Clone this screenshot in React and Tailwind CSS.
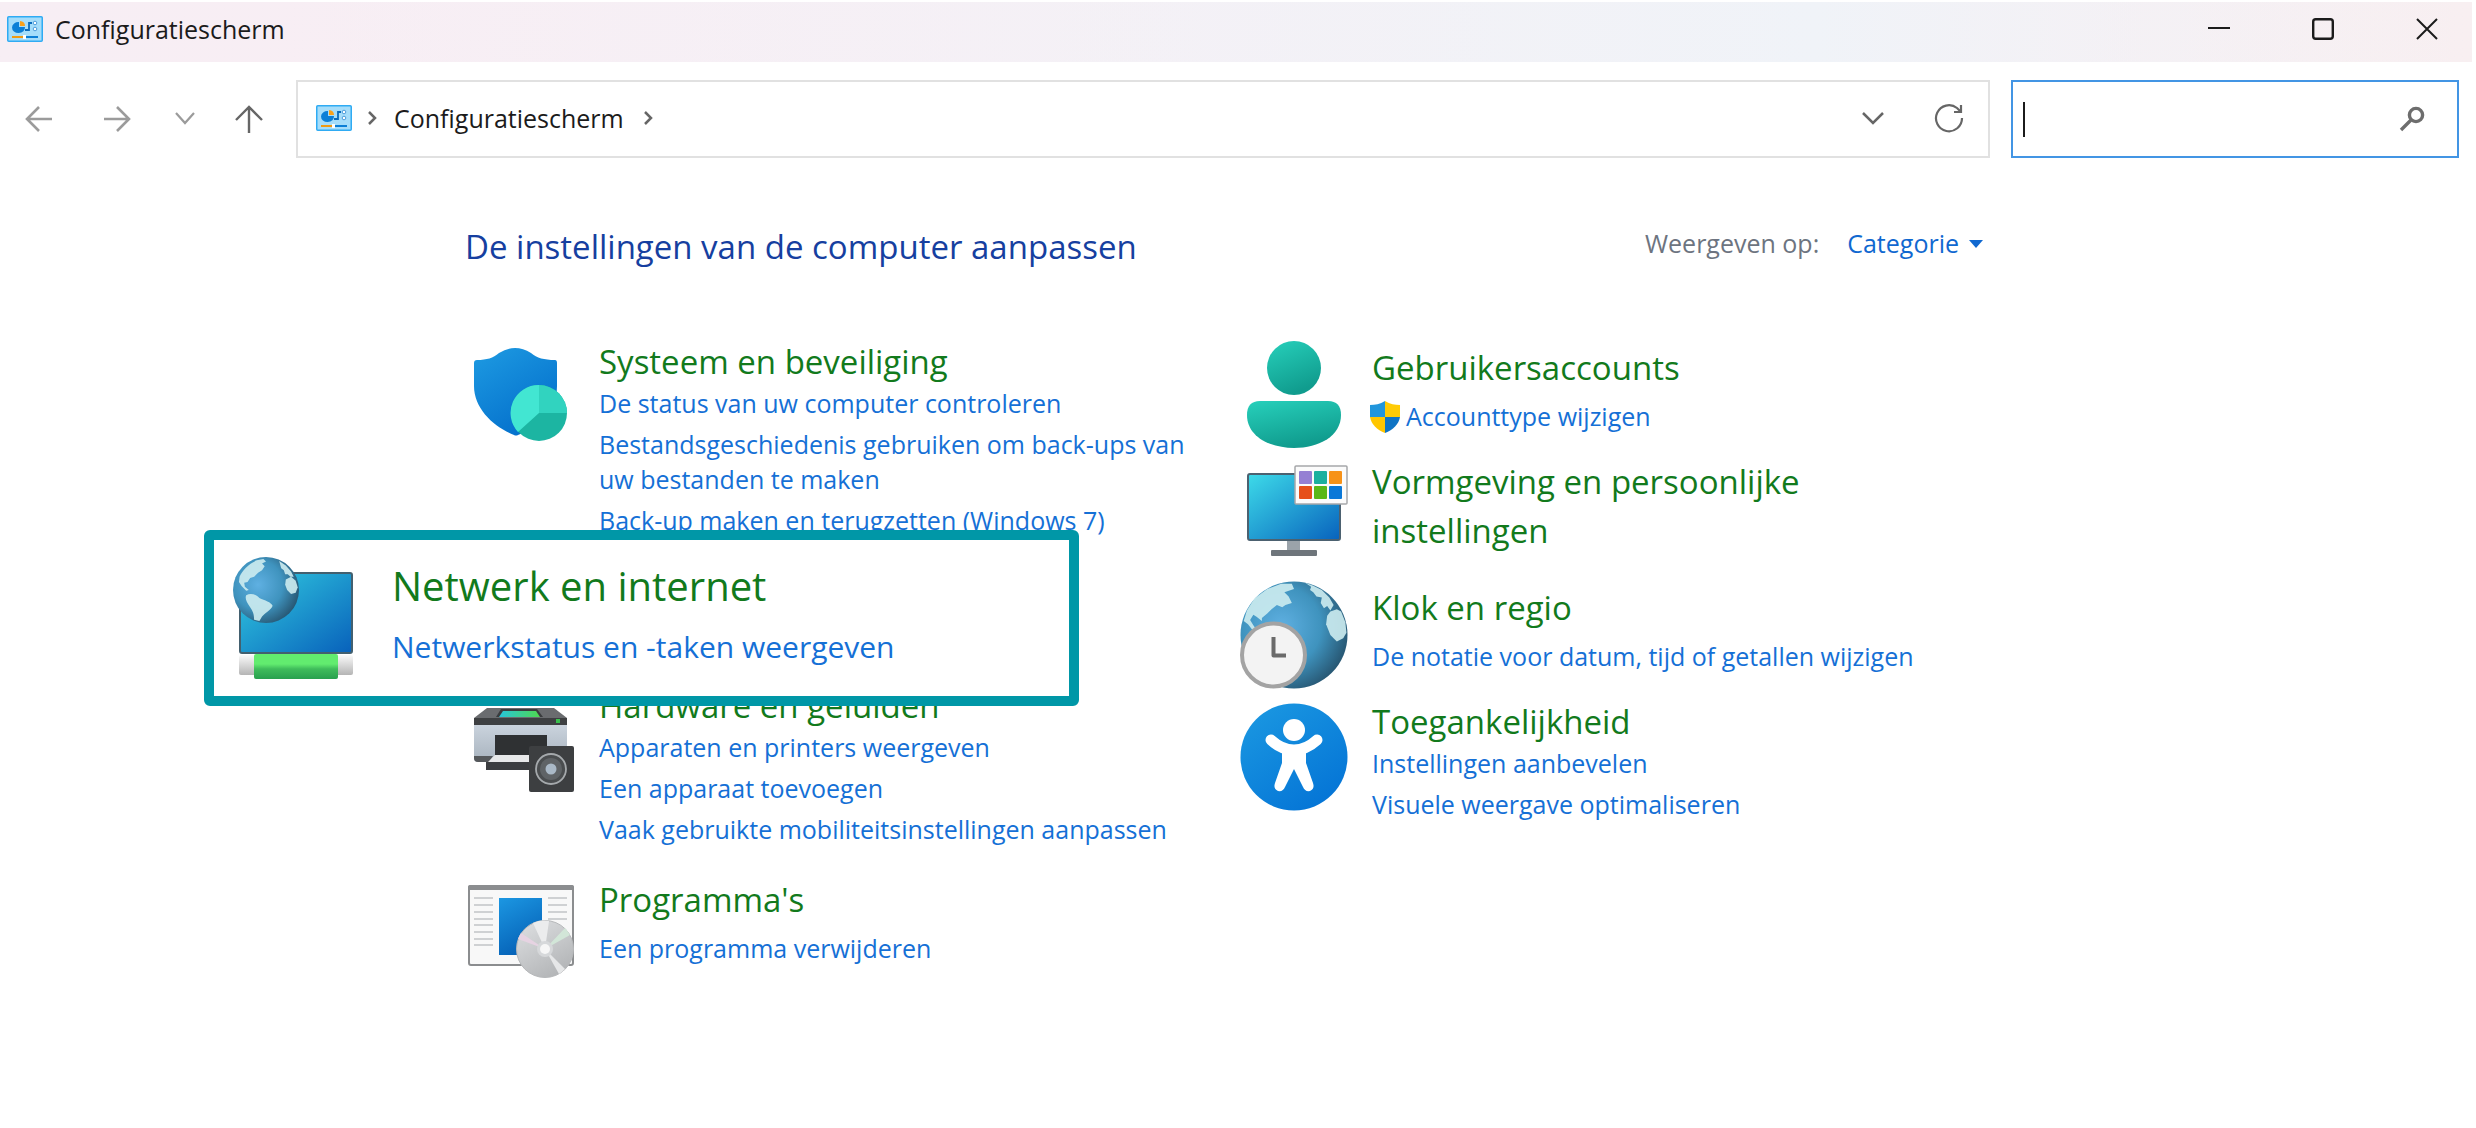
import React, { useState } from 'react';

const AMERICAS = [
  'M10 30 C14 20 24 10 36 5 L46 3 L50 7 L44 10 L48 14 L44 20 L38 24 L32 30 L26 32 L22 38 L17 39 L18 45 L24 50 L20 51 L13 44 L9 38 Z',
  'M20 58 C26 54 34 56 40 62 C48 66 58 68 60 74 C58 80 50 84 44 90 L40 97 L32 95 C32 86 30 82 26 76 C20 68 18 62 20 58 Z',
  'M70 6 L80 13 L88 22 L92 30 L87 30 L83 26 L79 26 L77 20 L73 17 Z',
  'M80 34 L88 30 L95 36 L98 46 L95 54 L88 56 L82 50 L79 42 Z'
];

const NORTH = [
  'M3 37 L6 27 L13 16 L25 7 L38 2 L48 2 L50 7 L41 10 L45 14 L48 20 L42 22 L39 24 L34 22 L29 26 L25 30 L20 34 L20 37 L15 33 L12 31 L9 36 L12 41 L15 45 L11 45 L7 40 Z',
  'M60 1 L68 4 L76 8 L83 15 L87 22 L84 27 L81 23 L78 25 L75 20 L76 15 L71 14 L68 10 L65 8 L66 5 Z',
  'M84 28 L90 26 L94 28 L98 38 L99 48 L96 53 L90 56 L84 50 L80 40 L81 32 Z'
];

function Globe({ id, land }) {
  return (
    <>
      <defs>
        <radialGradient id={id} cx="0.38" cy="0.42" r="0.68">
          <stop offset="0" stopColor="#5fb0e2" />
          <stop offset="0.55" stopColor="#3f93be" />
          <stop offset="1" stopColor="#244f69" />
        </radialGradient>
      </defs>
      <circle cx="50" cy="50" r="50" fill={`url(#${id})`} />
      {land.map((d) => (
        <path key={d} d={d} fill="#cdecf0" opacity="0.9" />
      ))}
    </>
  );
}

function ControlPanelIcon() {
  return (
    <svg width="36" height="26" viewBox="0 0 36 26" className="shrink-0" aria-hidden="true">
      <rect x="0.75" y="0.75" width="34.5" height="24.5" rx="1" fill="#a5ddfa" stroke="#2fabf3" strokeWidth="1.5" />
      <path d="M12 6 A6.5 5.5 0 1 0 18 11 L12 11 Z" fill="#0c7fd6" />
      <path d="M13 5 A6 5 0 0 1 18 10 L13 10 Z" fill="#f9a11b" />
      <path d="M18 14 H22 V7 H25" fill="none" stroke="#0b6cbd" strokeWidth="1.8" />
      <circle cx="28" cy="7" r="1.8" fill="#fff" stroke="#4e9ddb" />
      <circle cx="28" cy="13" r="1.8" fill="#fff" stroke="#4e9ddb" />
      <rect x="5" y="20" width="11" height="2" fill="#f09a12" />
      <rect x="16" y="19" width="3" height="4" fill="#fff" />
      <rect x="19" y="20" width="12" height="2" fill="#0c7fd6" />
    </svg>
  );
}

function SecurityIcon() {
  return (
    <svg viewBox="0 0 108 108" className="w-full" aria-hidden="true">
      <defs>
        <linearGradient id="shield" x1="0" y1="0" x2="0.6" y2="1">
          <stop offset="0" stopColor="#1e9be2" />
          <stop offset="1" stopColor="#0470cc" />
        </linearGradient>
      </defs>
      <path d="M7 20 C7 18 8 17 10 17 C20 17 26 15 32 10 Q48 0 64 10 C70 15 77 17 88 17 Q90 17 90 20 V43 C90 67 71 85 51 92 Q49 93 47 92 C27 84 7 66 7 43 Z" fill="url(#shield)" />
      <circle cx="72" cy="70" r="28" fill="#1cb5a2" />
      <path d="M72 70 V42 A28 28 0 0 1 100 70 Z" fill="#31d3bf" />
      <path d="M72 70 V42 A28 28 0 0 0 51 89 Z" fill="#42e6d2" />
    </svg>
  );
}

function HardwareIcon() {
  return (
    <svg viewBox="0 0 108 108" className="w-full" aria-hidden="true">
      <defs>
        <linearGradient id="printer" x1="0" y1="0" x2="0" y2="1">
          <stop offset="0" stopColor="#cad3dd" />
          <stop offset="1" stopColor="#a8b3be" />
        </linearGradient>
        <linearGradient id="scan" x1="0" y1="0" x2="1" y2="0">
          <stop offset="0" stopColor="#27c5da" />
          <stop offset="1" stopColor="#4fd950" />
        </linearGradient>
      </defs>
      <path d="M20 21 H87 L100 31 V38 H7 V31 Z" fill="#6a6c6f" />
      <path d="M7 31 H100 V38 H7 Z" fill="#3e4042" />
      <path d="M34 22 H70 L76 30 H29 Z" fill="#3a3c3e" />
      <path d="M36 24 H69 L73 30 H32 Z" fill="url(#scan)" />
      <rect x="89" y="32" width="4" height="4" fill="#3ac04d" />
      <path d="M7 38 H100 V75 H11 Q7 75 7 71 Z" fill="url(#printer)" />
      <path d="M7 69 H26 L22 75 H11 Q7 75 7 71 Z" fill="#55585b" />
      <path d="M28 48 H80 V70 H28 Z" fill="#2f3133" />
      <path d="M28 68 H72 V76 H20 Z" fill="#e7e8e9" />
      <path d="M19 75 H72 V83 H19 Z" fill="#3b3d40" />
      <rect x="62" y="59" width="45" height="46" rx="2" fill="#3d3f41" />
      <circle cx="84" cy="82" r="15" fill="#4a4d4f" stroke="#a5a9ac" strokeWidth="1.8" />
      <circle cx="84" cy="82" r="11" fill="#5f6366" />
      <circle cx="84" cy="82" r="5.5" fill="#aab9c7" />
    </svg>
  );
}

function ProgramsIcon() {
  return (
    <svg viewBox="0 0 108 108" className="w-full" aria-hidden="true">
      <defs>
        <linearGradient id="program" x1="0" y1="0" x2="0.4" y2="1">
          <stop offset="0" stopColor="#1c97e2" />
          <stop offset="1" stopColor="#0663b8" />
        </linearGradient>
        <linearGradient id="disc" x1="0" y1="0" x2="0.6" y2="1">
          <stop offset="0" stopColor="#dfe1e3" />
          <stop offset="1" stopColor="#b4b6b8" />
        </linearGradient>
      </defs>
      <rect x="2" y="13" width="104" height="79" rx="2" fill="#f8f8f8" stroke="#8b8d8f" strokeWidth="2" />
      <path d="M1 14 Q1 12 3 12 H105 Q107 12 107 14 V17 H1 Z" fill="#8b8d8f" />
      <path d="M7 25 H26 M7 32 H26 M7 39 H26 M7 46 H26 M7 52 H26 M7 59 H26 M7 66 H26 M7 72 H26 M81 25 H100 M81 32 H100 M81 39 H100 M81 46 H100" stroke="#cfd1d3" strokeWidth="2" />
      <rect x="32" y="25" width="43" height="57" fill="url(#program)" />
      <circle cx="78" cy="76" r="28.5" fill="url(#disc)" stroke="#b6b8ba" />
      <path d="M78 76 L66 50 A28 28 0 0 1 82 48 Z" fill="#ebeced" />
      <path d="M78 76 L92 101 A28 28 0 0 0 98 96 Z" fill="#e6e7e8" />
      <path d="M78 76 L51 66 A28 28 0 0 1 54 60 Z" fill="#e6d3e2" />
      <path d="M78 76 L98 55 A28 28 0 0 1 103 62 Z" fill="#d2e6d8" />
      <circle cx="78" cy="76" r="8" fill="#d6d8da" />
      <circle cx="78" cy="76" r="5" fill="#f6f6f6" />
    </svg>
  );
}

function UsersIcon() {
  return (
    <svg viewBox="0 0 108 108" className="w-full" aria-hidden="true">
      <defs>
        <linearGradient id="user" x1="0" y1="0" x2="0.4" y2="1">
          <stop offset="0" stopColor="#27d0bb" />
          <stop offset="1" stopColor="#109c8e" />
        </linearGradient>
      </defs>
      <circle cx="54" cy="27" r="27" fill="url(#user)" />
      <path d="M20 60 H88 Q101 60 101 74 C101 95 79 107 54 107 S7 95 7 74 Q7 60 20 60 Z" fill="url(#user)" />
    </svg>
  );
}

function DisplayIcon() {
  return (
    <svg viewBox="0 0 108 108" className="w-full" aria-hidden="true">
      <defs>
        <linearGradient id="screen" x1="0" y1="0" x2="1" y2="1">
          <stop offset="0" stopColor="#3ddbe9" />
          <stop offset="1" stopColor="#0862bd" />
        </linearGradient>
      </defs>
      <rect x="47" y="85" width="13" height="11" fill="#9ba3aa" />
      <rect x="31" y="95" width="46" height="6" rx="1" fill="#6e757b" />
      <rect x="8" y="19" width="92" height="66" rx="2" fill="url(#screen)" stroke="#4c6170" strokeWidth="2" />
      <rect x="55" y="11" width="52" height="38" rx="1" fill="#fbfbfb" stroke="#a6a8aa" strokeWidth="1.5" />
      <rect x="59" y="16" width="13" height="13" rx="1" fill="#9580d3" />
      <rect x="74" y="16" width="13" height="13" rx="1" fill="#1bb09e" />
      <rect x="89" y="16" width="13" height="13" rx="1" fill="#f79218" />
      <rect x="59" y="31" width="13" height="13" rx="1" fill="#e6501a" />
      <rect x="74" y="31" width="13" height="13" rx="1" fill="#5ab818" />
      <rect x="89" y="31" width="13" height="13" rx="1" fill="#0a78d8" />
    </svg>
  );
}

function ClockIcon() {
  return (
    <svg viewBox="0 0 108 108" className="w-full" aria-hidden="true">
      <g transform="translate(0.5 0.5) scale(1.07)">
        <Globe id="clock-globe" land={NORTH} />
      </g>
      <circle cx="33.5" cy="74" r="31.5" fill="#f3f3f3" stroke="#a3a3a3" strokeWidth="4" />
      <path d="M33.5 56 V74.5 H46" fill="none" stroke="#6a6a6a" strokeWidth="4" strokeLinejoin="round" />
    </svg>
  );
}

function AccessibilityIcon() {
  return (
    <svg viewBox="0 0 108 108" className="w-full" aria-hidden="true">
      <defs>
        <linearGradient id="access" x1="0" y1="0" x2="0.7" y2="1">
          <stop offset="0" stopColor="#1c9ae2" />
          <stop offset="1" stopColor="#0575d6" />
        </linearGradient>
      </defs>
      <circle cx="54" cy="54" r="53.5" fill="url(#access)" />
      <circle cx="54" cy="27" r="11" fill="#fff" />
      <path d="M31 37 Q42 47 54 47 T77 37" fill="none" stroke="#fff" strokeWidth="11" strokeLinecap="round" strokeLinejoin="round" />
      <path d="M42 43 Q54 50 66 43 V60 L73 80 Q75 86 70 88 Q65 89 63 84 L54 66 L45 84 Q43 89 38 88 Q33 86 35 80 L42 60 Z" fill="#fff" />
    </svg>
  );
}

function NetworkIcon() {
  return (
    <svg viewBox="0 0 124 124" className="w-[124px] shrink-0" aria-hidden="true">
      <defs>
        <linearGradient id="net-screen" x1="0" y1="0" x2="1" y2="1">
          <stop offset="0" stopColor="#32cce0" />
          <stop offset="1" stopColor="#0861bb" />
        </linearGradient>
        <linearGradient id="net-pipe" x1="0" y1="0" x2="0" y2="1">
          <stop offset="0" stopColor="#fafafa" />
          <stop offset="1" stopColor="#b5b5b5" />
        </linearGradient>
        <linearGradient id="net-cable" x1="0" y1="0" x2="0" y2="1">
          <stop offset="0.4" stopColor="#62ec6f" />
          <stop offset="0.6" stopColor="#3fbc5b" />
          <stop offset="1" stopColor="#28a04e" />
        </linearGradient>
      </defs>
      <rect x="8" y="17" width="112" height="80" rx="2" fill="url(#net-screen)" stroke="#43606f" strokeWidth="2" />
      <rect x="7" y="99" width="114" height="20" rx="2" fill="url(#net-pipe)" />
      <rect x="22" y="98" width="84" height="25" rx="2" fill="url(#net-cable)" />
      <g transform="translate(1 1) scale(0.66)">
        <Globe id="net-globe" land={AMERICAS} />
      </g>
    </svg>
  );
}

function UacShield() {
  return (
    <svg width="34" height="34" viewBox="0 0 34 34" className="-ml-1 shrink-0" aria-hidden="true">
      <path d="M17 1 C12 4 7 5 2 5 V15 C2 16 2 16 2 17 H17 Z" fill="#2196dc" />
      <path d="M17 1 C22 4 27 5 32 5 V17 H17 Z" fill="#ffcb05" />
      <path d="M2 17 C3 24 9 30 17 33 V17 Z" fill="#ffc600" />
      <path d="M32 17 C31 24 25 30 17 33 V17 Z" fill="#0f74c4" />
    </svg>
  );
}

function Chevron({ direction, className }) {
  return (
    <svg width="24" height="24" viewBox="0 0 24 24" fill="none" stroke="currentColor" className={className} aria-hidden="true">
      <path d={direction === 'down' ? 'M2 7 L12 17 L22 7' : 'M9 6 L15 12 L9 18'} strokeWidth="2.5" />
    </svg>
  );
}

const LEFT_TOP = {
  title: 'Systeem en beveiliging',
  Icon: SecurityIcon,
  links: [
    'De status van uw computer controleren',
    'Bestandsgeschiedenis gebruiken om back-ups van uw bestanden te maken',
    'Back-up maken en terugzetten (Windows 7)'
  ]
};

const LEFT_BOTTOM = [
  {
    title: 'Hardware en geluiden',
    Icon: HardwareIcon,
    links: ['Apparaten en printers weergeven', 'Een apparaat toevoegen', 'Vaak gebruikte mobiliteitsinstellingen aanpassen']
  },
  { title: "Programma's", Icon: ProgramsIcon, links: ['Een programma verwijderen'] }
];

const RIGHT = [
  { title: 'Gebruikersaccounts', Icon: UsersIcon, links: ['Accounttype wijzigen'], shield: true, space: 'pb-2' },
  { title: 'Vormgeving en persoonlijke instellingen', Icon: DisplayIcon, links: [], space: 'pb-5' },
  { title: 'Klok en regio', Icon: ClockIcon, links: ['De notatie voor datum, tijd of getallen wijzigen'], space: 'pb-2' },
  { title: 'Toegankelijkheid', Icon: AccessibilityIcon, links: ['Instellingen aanbevelen', 'Visuele weergave optimaliseren'] }
];

function Category({ title, Icon, links, shield, space = '' }) {
  const compact = links.length > 1;

  return (
    <section className={`flex items-start gap-6 pl-0.5 ${space}`}>
      <div className={`w-[108px] shrink-0 ${compact ? 'pt-1.5' : '-mt-0.5'}`}>
        <Icon />
      </div>
      <div className="max-w-[620px] min-w-0">
        <h2 className="text-[33px] leading-[49px] max-w-[500px] text-[#127a1c]">
          <a href="#" className="hover:underline">{title}</a>
        </h2>
        {links.length > 0 && (
          <ul className={`flex flex-col gap-1.5 text-[25px] leading-[35px] text-[#1570d6] ${compact ? '' : 'pt-[7px]'}`}>
            {links.map((link) => (
              <li key={link} className="flex items-center gap-1">
                {shield && <UacShield />}
                <a href="#" className="hover:underline">{link}</a>
              </li>
            ))}
          </ul>
        )}
      </div>
    </section>
  );
}

function TitleBar() {
  return (
    <header className="mt-0.5 mr-1 flex h-[60px] justify-between bg-linear-to-r from-[#f7eef4] via-[#f9eef4] via-40% to-[#f8eff1]">
      <div className="flex items-center gap-3 pb-1.5 pl-[7px]">
        <ControlPanelIcon />
        <h1 className="text-[25px] leading-[35px] text-[#1b1b1b]">Configuratiescherm</h1>
      </div>
      <div className="flex grow items-center justify-end gap-[82px] bg-linear-to-r from-transparent via-[#f0f3f8] via-70% to-transparent pr-[34px] pb-1.5 text-[#1b1b1b]">
        <button type="button" aria-label="Minimaliseren">
          <svg width="22" height="22" viewBox="0 0 22 22" stroke="currentColor" strokeWidth="2"><path d="M0 10 H22" /></svg>
        </button>
        <button type="button" aria-label="Maximaliseren">
          <svg width="22" height="22" viewBox="0 0 22 22" fill="none" stroke="currentColor" strokeWidth="2.4"><rect x="1.2" y="1.2" width="19.6" height="19.6" rx="2.5" /></svg>
        </button>
        <button type="button" aria-label="Sluiten">
          <svg width="22" height="22" viewBox="0 0 22 22" stroke="currentColor" strokeWidth="2"><path d="M1 1 L21 21 M21 1 L1 21" /></svg>
        </button>
      </div>
    </header>
  );
}

function NavBar() {
  const [query, setQuery] = useState('');

  return (
    <nav className="flex items-center pt-[18px] pr-[17px]">
      <div className="flex w-[296px] shrink-0 items-center text-[#9b9b9b]">
        <button type="button" aria-label="Terug" className="ml-[25px]">
          <svg width="28" height="28" viewBox="0 0 28 28" fill="none" stroke="currentColor" strokeWidth="2.6"><path d="M27 14 H2 M14 2 L2 14 L14 26" /></svg>
        </button>
        <button type="button" aria-label="Vooruit" className="ml-[50px]">
          <svg width="28" height="28" viewBox="0 0 28 28" fill="none" stroke="currentColor" strokeWidth="2.6"><path d="M1 14 H26 M14 2 L26 14 L14 26" /></svg>
        </button>
        <button type="button" aria-label="Recente locaties" className="ml-[42px]">
          <svg width="24" height="24" viewBox="0 0 24 24" fill="none" stroke="currentColor" strokeWidth="2.2"><path d="M3 6 L12 16 L21 6" /></svg>
        </button>
        <button type="button" aria-label="Omhoog" className="ml-[38px] text-[#666666]">
          <svg width="28" height="28" viewBox="0 0 28 28" fill="none" stroke="currentColor" strokeWidth="2.4"><path d="M14 28 V2 M1 15 L14 2 L27 15" /></svg>
        </button>
      </div>
      <div className="flex h-[78px] grow items-center border-2 border-[#e1e1e1] pr-6 pb-0.5 pl-[18px] text-[#666666]">
        <ControlPanelIcon />
        <Chevron direction="right" className="ml-2" />
        <a href="#" className="ml-2.5 text-[25px] leading-[35px] text-[#1b1b1b]">Configuratiescherm</a>
        <Chevron direction="right" className="ml-3" />
        <button type="button" aria-label="Vorige locaties" className="ml-auto">
          <Chevron direction="down" />
        </button>
        <button type="button" aria-label="Vernieuwen" className="ml-[49px]">
          <svg width="30" height="30" viewBox="0 0 30 30" fill="none" stroke="currentColor" strokeWidth="2.2">
            <path d="M28 15 A13 13 0 1 1 23 5 L27 9 M27 2 V9 H20" />
          </svg>
        </button>
      </div>
      <div className="ml-[21px] flex h-[78px] w-[448px] shrink-0 items-center border-2 border-[#4395e4] pr-8 pl-2.5">
        <span className="h-[35px] w-0.5 bg-[#1b1b1b]" />
        <input
          type="text"
          aria-label="Zoeken in Configuratiescherm"
          value={query}
          onChange={(e) => setQuery(e.target.value)}
          className="h-[35px] min-w-0 grow bg-transparent pl-1 text-[25px] text-[#1b1b1b] outline-none"
        />
        <button type="button" aria-label="Zoeken" className="text-[#6d6d6d]">
          <svg width="26" height="26" viewBox="0 0 26 26" fill="none" stroke="currentColor" strokeWidth="3.4">
            <circle cx="17" cy="9" r="6.6" />
            <path d="M12 14 L2 24" />
          </svg>
        </button>
      </div>
    </nav>
  );
}

function NetworkCategory() {
  return (
    <section className="relative h-[143px]">
      <div className="absolute -top-2 -left-[261px] z-10 flex h-[176px] w-[875px] gap-9 rounded-md border-10 border-[#0097a7] bg-white pl-[18px]">
        <div className="flex shrink-0 items-start pt-4">
          <NetworkIcon />
        </div>
        <div>
          <h2 className="pt-4 text-[40px] leading-[60px] text-[#127a1c]">
            <a href="#">Netwerk en internet</a>
          </h2>
          <a href="#" className="block pt-1.5 text-[30px] leading-[49px] text-[#1570d6]">Netwerkstatus en -taken weergeven</a>
        </div>
      </div>
    </section>
  );
}

export default function App() {
  return (
    <div className="min-h-screen bg-white font-['Open_Sans','Noto_Sans',sans-serif]">
      <TitleBar />
      <NavBar />
      <main className="mx-auto w-full max-w-[1546px]">
        <div className="flex items-start justify-between pt-16 pr-7">
          <h2 className="text-[33px] leading-[49px] text-[#163fa0]">De instellingen van de computer aanpassen</h2>
          <div className="flex items-center gap-7 pt-1 text-[25px] leading-[35px]">
            <label htmlFor="view-by" className="text-[#6d7480]">Weergeven op:</label>
            <div className="relative flex items-center text-[#1068d0]">
              <select id="view-by" className="field-sizing-content appearance-none bg-transparent pr-6 outline-none">
                <option>Categorie</option>
                <option>Grote pictogrammen</option>
                <option>Kleine pictogrammen</option>
              </select>
              <svg width="14" height="8" viewBox="0 0 14 8" className="pointer-events-none absolute right-0" aria-hidden="true">
                <path d="M0 0 H14 L7 8 Z" fill="currentColor" />
              </svg>
            </div>
          </div>
        </div>
        <div className="grid grid-cols-2 pt-[66px]">
          <div>
            <Category {...LEFT_TOP} />
            <NetworkCategory />
            <div className="flex flex-col gap-7">
              {LEFT_BOTTOM.map((category) => (
                <Category key={category.title} {...category} />
              ))}
            </div>
          </div>
          <div className="pt-1.5">
            {RIGHT.map((category) => (
              <Category key={category.title} {...category} />
            ))}
          </div>
        </div>
      </main>
    </div>
  );
}
